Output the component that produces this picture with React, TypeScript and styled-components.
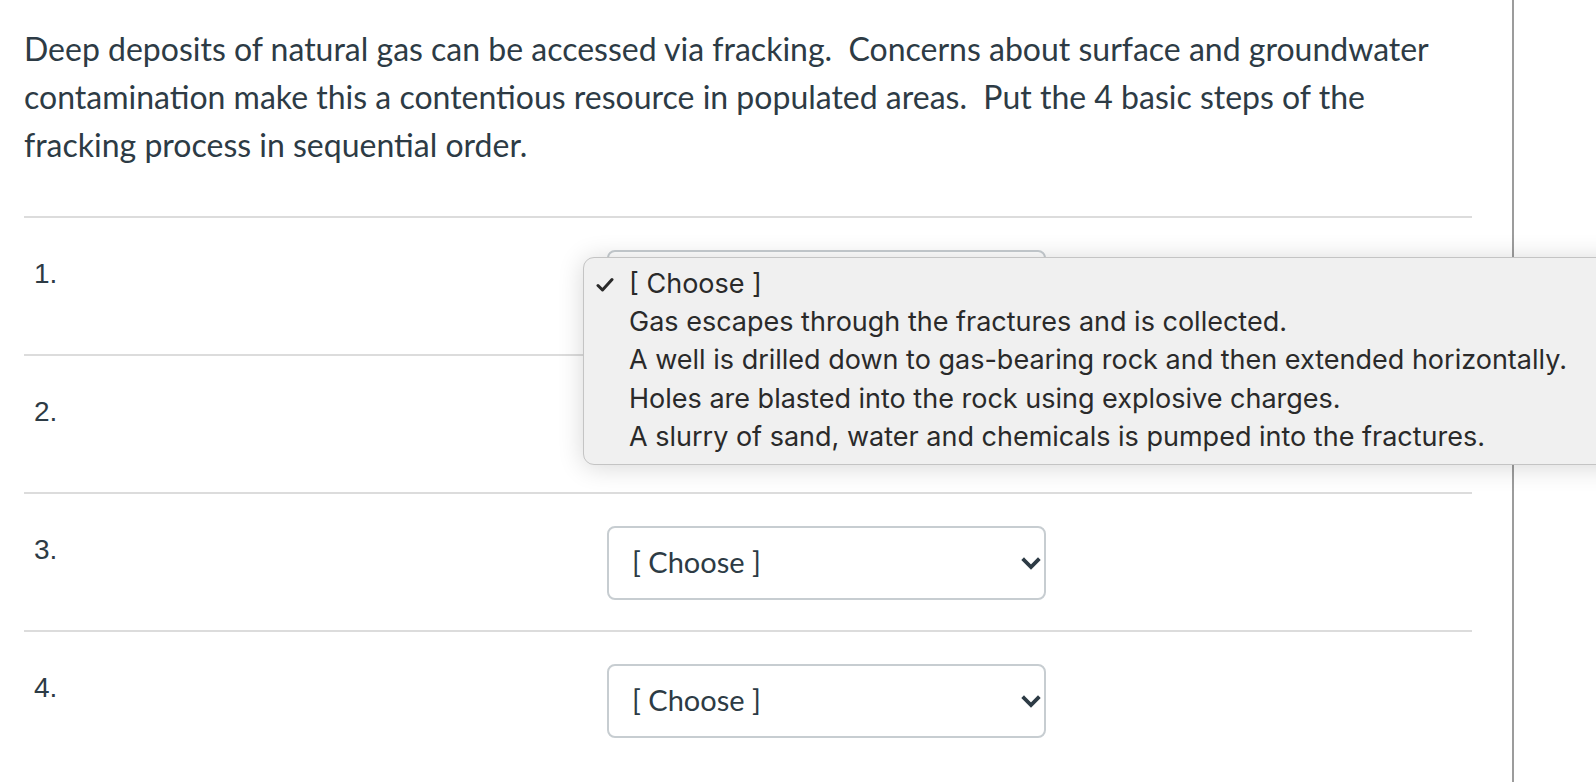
import React from "react";
import styled, { createGlobalStyle } from "styled-components";

const Global = createGlobalStyle`
  html, body { margin: 0; padding: 0; background: #fff; overflow: hidden; }
  body { width: 1596px; height: 782px; }
`;

const Page = styled.div`
  position: relative;
  display: flex;
  width: 1596px;
  height: 782px;
  overflow: hidden;
  background: #fff;
`;

const Main = styled.div`
  width: 1512px;
  box-sizing: border-box;
  padding: 25px 40px 0 24px;
`;

const Side = styled.div`
  flex: 1;
  border-left: 2px solid #9c9c9c;
`;

const Question = styled.p`
  margin: 0 0 47px;
  font-family: Lato, "Liberation Sans", sans-serif;
  font-size: 32px;
  line-height: 48px;
  color: #2d3b45;
`;

const Row = styled.div`
  display: grid;
  grid-template-columns: 583px 439px;
  border-top: 2px solid #dcdcdc;
  padding: 32px 0 30px;
`;

const Num = styled.div`
  padding-left: 10px;
  font-family: "Liberation Sans", Arial, sans-serif;
  font-size: 28px;
  line-height: 48px;
  color: #2d3b45;
`;

const Select = styled.div`
  box-sizing: border-box;
  height: 74px;
  display: flex;
  align-items: center;
  justify-content: space-between;
  padding: 0 3px 3px 23px;
  border: 2px solid #c7cdd1;
  border-radius: 8px;
  background: #fff;
  font-family: Lato, "Liberation Sans", sans-serif;
  font-size: 29px;
  color: #2d3b45;
`;

const ChevronBox = styled.svg`
  margin-top: 3px;
`;

const Menu = styled.div`
  position: absolute;
  left: 583px;
  top: 257px;
  width: 1100px;
  box-sizing: border-box;
  padding: 7px 0 8px;
  background: #f0f0f0;
  border: 1px solid #c4c4c4;
  border-radius: 11px;
  box-shadow: 0 2px 26px rgba(0, 0, 0, 0.16);
`;

const Item = styled.div`
  position: relative;
  height: 38.2px;
  line-height: 38.2px;
  padding-left: 45px;
  font-family: Inter, "Liberation Sans", sans-serif;
  font-size: 27px;
  color: #2a2a2a;
  white-space: nowrap;
`;

const Check = styled.svg`
  position: absolute;
  left: 12px;
  top: 12px;
`;

const Chevron = () => (
  <ChevronBox width="20" height="13" viewBox="0 0 20 13">
    <path d="M3 3 L10 10 L17 3" fill="none" stroke="#2d3b45" strokeWidth="3.8" strokeLinecap="square" />
  </ChevronBox>
);

const options = [
  "[ Choose ]",
  "Gas escapes through the fractures and is collected.",
  "A well is drilled down to gas-bearing rock and then extended horizontally.",
  "Holes are blasted into the rock using explosive charges.",
  "A slurry of sand, water and chemicals is pumped into the fractures.",
];

export default function App() {
  return (
    <Page>
      <Global />
      <Main>
        <Question>
          Deep deposits of natural gas can be accessed via fracking.&nbsp; Concerns about surface and groundwater
          contamination make this a contentious resource in populated areas.&nbsp; Put the 4 basic steps of the
          fracking process in sequential order.
        </Question>
        {[1, 2, 3, 4].map((n) => (
          <Row key={n}>
            <Num>{n}.</Num>
            <Select>
              <span>[ Choose ]</span>
              <Chevron />
            </Select>
          </Row>
        ))}
      </Main>
      <Side />
      <Menu>
        {options.map((o, i) => (
          <Item key={i}>
            {i === 0 && (
              <Check width="18" height="16" viewBox="0 0 18 16">
                <path d="M2 8.5 L6.5 13 L16 2.5" fill="none" stroke="#2a2a2a" strokeWidth="3" strokeLinecap="round" strokeLinejoin="round" />
              </Check>
            )}
            {o}
          </Item>
        ))}
      </Menu>
    </Page>
  );
}
